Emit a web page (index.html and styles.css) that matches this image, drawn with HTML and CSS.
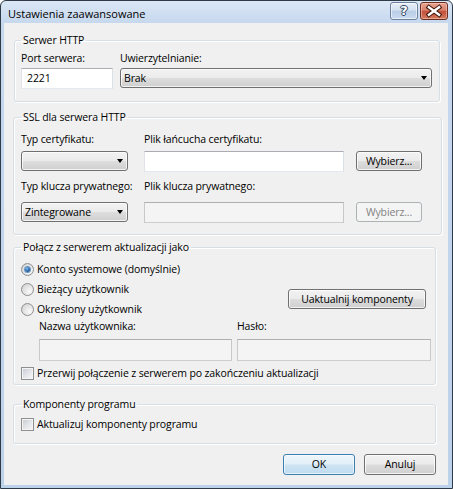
FILE: index.html
```html
<!DOCTYPE html>
<html lang="pl">
<head>
<meta charset="utf-8">
<title>Ustawienia zaawansowane</title>
<link rel="stylesheet" href="styles.css">
</head>
<body>
<div class="window">
  <div class="titlebar">
    <span class="title">Ustawienia zaawansowane</span>
    <div class="caption-btns">
      <div class="cap help"><span>?</span></div>
      <div class="cap close">
        <svg width="28" height="18" viewBox="0 0 28 18">
          <path d="M8.5 5 L19.5 13 M19.5 5 L8.5 13" stroke="#3b1309" stroke-width="4.8" stroke-linecap="square" fill="none"/>
          <path d="M8.5 5 L19.5 13 M19.5 5 L8.5 13" stroke="#ffffff" stroke-width="2.6" stroke-linecap="square" fill="none"/>
        </svg>
      </div>
    </div>
  </div>
  <div class="client">
    <fieldset class="group g1">
      <legend>Serwer HTTP</legend>
      <div class="g1-row">
        <div class="col port">
          <div class="lbl">Port serwera:</div>
          <div class="textbox">2221</div>
        </div>
        <div class="col auth">
          <div class="lbl">Uwierzytelnianie:</div>
          <div class="combo"><span>Brak</span><i class="arrow"></i></div>
        </div>
      </div>
    </fieldset>

    <fieldset class="group g2">
      <legend>SSL dla serwera HTTP</legend>
      <div class="ssl-grid">
        <div class="lbl r1">Typ certyfikatu:</div>
        <div class="lbl r1">Plik łańcucha certyfikatu:</div>
        <div class="r1"></div>
        <div class="combo c1"><span></span><i class="arrow"></i></div>
        <div class="textbox c1"></div>
        <div class="btn c1">Wybierz...</div>
        <div class="lbl r2">Typ klucza prywatnego:</div>
        <div class="lbl r2">Plik klucza prywatnego:</div>
        <div class="r2"></div>
        <div class="combo c2"><span>Zintegrowane</span><i class="arrow"></i></div>
        <div class="textbox disabled c2"></div>
        <div class="btn disabled c2">Wybierz...</div>
      </div>
    </fieldset>

    <fieldset class="group g3">
      <legend>Połącz z serwerem aktualizacji jako</legend>
      <div class="g3-top">
        <div class="radios">
          <div class="opt"><span class="radio checked"></span><span>Konto systemowe (domyślnie)</span></div>
          <div class="opt"><span class="radio"></span><span>Bieżący użytkownik</span></div>
          <div class="opt"><span class="radio"></span><span>Określony użytkownik</span></div>
        </div>
        <div class="btn update">Uaktualnij komponenty</div>
      </div>
      <div class="cred">
        <div class="lbl">Nazwa użytkownika:</div>
        <div class="lbl">Hasło:</div>
        <div class="textbox disabled tall"></div>
        <div class="textbox disabled tall"></div>
      </div>
      <div class="opt chk-row"><span class="checkbox"></span><span>Przerwij połączenie z serwerem po zakończeniu aktualizacji</span></div>
    </fieldset>

    <fieldset class="group g4">
      <legend>Komponenty programu</legend>
      <div class="opt chk-row"><span class="checkbox"></span><span>Aktualizuj komponenty programu</span></div>
    </fieldset>

    <div class="footer">
      <div class="btn default">OK</div>
      <div class="btn">Anuluj</div>
    </div>
  </div>
</div>
</body>
</html>
```

FILE: styles.css
```css
html, body {
  margin: 0;
  padding: 0;
  background: #ffffff;
}

body {
  font-family: "Open Sans", "Noto Sans", sans-serif;
  font-size: 10.5px;
  letter-spacing: -0.12px;
  line-height: 15px;
  color: #000000;
}

.window {
  width: 453px;
  height: 489px;
  box-sizing: border-box;
  border: 1px solid #2e3a48;
  border-radius: 6px 6px 0 0;
  background: linear-gradient(#dbe7f5 0px, #c6d8ee 22px, #bcd1ea 100%);
  padding: 0 4px 3px 3px;
  display: flex;
  flex-direction: column;
}

/* ---------- title bar ---------- */
.titlebar {
  height: 22px;
  flex: none;
  display: flex;
  align-items: flex-start;
}

.title {
  font-size: 11px;
  letter-spacing: 0;
  line-height: 15px;
  padding: 5px 0 0 4px;
  color: #000;
}

.caption-btns {
  margin-left: auto;
  display: flex;
  gap: 2px;
  padding-top: 1px;
}

.cap {
  width: 28px;
  height: 18px;
  box-sizing: border-box;
  border-radius: 3px;
  display: flex;
  align-items: center;
  justify-content: center;
}

.help {
  border: 1px solid #6b819e;
  background: linear-gradient(#e9f0f8 0%, #d3e1f1 45%, #b9cde6 50%, #c9dbef 100%);
  box-shadow: inset 0 0 0 1px rgba(255, 255, 255, 0.6);
}

.help span {
  font-family: "DejaVu Sans", sans-serif;
  font-weight: bold;
  font-size: 13px;
  letter-spacing: 0;
  line-height: 16px;
  color: #ffffff;
  text-shadow: 1px 0 0 #2f4361, -1px 0 0 #2f4361, 0 1px 0 #2f4361, 0 -1px 0 #2f4361;
}

.close {
  border: 1px solid #6e2d21;
  background: linear-gradient(#e8a591 0%, #d7806a 45%, #c4503a 52%, #d27b5f 100%);
  box-shadow: inset 0 0 0 1px rgba(255, 220, 210, 0.45);
}

.close svg {
  display: block;
}

/* ---------- client ---------- */
.client {
  flex: 1;
  background: #f0f0f0;
  padding: 10px 0 0 10px;
  display: flex;
  flex-direction: column;
  align-items: flex-start;
}

.group {
  box-sizing: border-box;
  margin: 0;
  min-width: 0;
  border: 1px solid #d5dfe5;
  border-radius: 3px;
  box-shadow: inset 1px 1px 0 #ffffff, 1px 1px 0 #ffffff;
}

.group legend {
  padding: 0 2px;
  line-height: 15px;
}

.lbl {
  white-space: nowrap;
  height: 15px;
}

/* group 1 */
.g1 {
  width: 426px;
  padding: 3px 7px 12px 6px;
}

.g1-row {
  display: flex;
  gap: 7px;
}

.col.port {
  width: 92px;
}

.col.auth {
  flex: 1;
}

.g1 .textbox,
.g1 .combo {
  margin-top: 2px;
}

.g1 .textbox {
  height: 21px;
}

/* group 2 */
.g2 {
  width: 429px;
  margin: 8px 0 0 -1px;
  padding: 7px 7px 11px 7px;
}

.ssl-grid {
  display: grid;
  grid-template-columns: 107px 200px 62px;
  column-gap: 16px;
}

.ssl-grid > :nth-child(3n) {
  margin-left: -4px;
}

.ssl-grid .c1 {
  margin-top: 4px;
}

.ssl-grid .r2 {
  margin-top: 7px;
}

.ssl-grid .c2 {
  margin-top: 8px;
}

/* group 3 */
.g3 {
  width: 423px;
  margin: 5px 0 0 -1px;
  padding: 4px 4px 3px 7px;
}

.g3-top {
  display: flex;
}

.radios {
  display: flex;
  flex-direction: column;
}

.opt {
  display: flex;
  align-items: center;
  gap: 3px;
  height: 20px;
  white-space: nowrap;
}

.btn.update {
  width: 138px;
  margin: 30px 5px 0 auto;
}

.cred {
  display: grid;
  grid-template-columns: 193px 194px;
  column-gap: 5px;
  margin-left: 18px;
}

.cred .textbox {
  margin-top: 5px;
  height: 22px;
}

.chk-row {
  height: 15px;
  gap: 3px;
}

.g3 .chk-row {
  margin-top: 5px;
}

/* group 4 */
.g4 {
  width: 423px;
  margin: 12px 0 0 -1px;
  padding: 5px 4px 11px 7px;
}

/* footer */
.footer {
  align-self: stretch;
  display: flex;
  justify-content: flex-end;
  gap: 9px;
  margin-top: 10px;
  padding-right: 12px;
}

.footer .btn {
  width: 72px;
  height: 21px;
}

/* ---------- controls ---------- */
.textbox {
  box-sizing: border-box;
  height: 21px;
  border: 1px solid;
  border-color: #abadb3 #dbdfe6 #e3e9ef #e2e3ea;
  background: #ffffff;
  padding: 0 5px;
  display: flex;
  align-items: center;
}

.textbox.disabled {
  background: #f4f4f4;
  border-color: #afafaf #c8c8c8 #cdcdcd #c8c8c8;
}

.combo,
.btn {
  box-sizing: border-box;
  height: 20px;
  border: 1px solid #707070;
  border-radius: 3px;
  background: linear-gradient(#f2f2f2 0%, #ebebeb 48%, #dddddd 52%, #cfcfcf 100%);
  box-shadow: inset 0 0 0 1px rgba(255, 255, 255, 0.75);
  display: flex;
  align-items: center;
}

.combo {
  padding: 0 4px 0 3px;
}

.combo .arrow {
  margin-left: auto;
  width: 0;
  height: 0;
  border-left: 3.5px solid transparent;
  border-right: 3.5px solid transparent;
  border-top: 4px solid #000000;
}

.btn {
  justify-content: center;
}

.btn.disabled {
  border-color: #adb2b5;
  background: #f4f4f4;
  box-shadow: none;
  color: #838383;
}

.btn.default {
  border-color: #3c7fb1;
  background: linear-gradient(#eef6fb 0%, #e2eff8 48%, #cde4f3 52%, #c0dcf0 100%);
  box-shadow: inset 0 0 0 1px rgba(255, 255, 255, 0.6);
}

.radio {
  flex: none;
  width: 13px;
  height: 13px;
  box-sizing: border-box;
  border-radius: 50%;
  border: 1px solid #8e8f8f;
  background: radial-gradient(circle at 70% 70%, #fafafa 0%, #e6e6e6 45%, #cbcbcb 100%);
  display: flex;
  align-items: center;
  justify-content: center;
}

.radio.checked::after {
  content: "";
  width: 5px;
  height: 5px;
  border-radius: 50%;
  background: radial-gradient(circle at 40% 35%, #8ec3f0 0%, #2d6fb3 45%, #133c68 100%);
  box-shadow: 0 0 0 1px #6b9bc9;
}

.checkbox {
  flex: none;
  width: 13px;
  height: 13px;
  box-sizing: border-box;
  border: 1px solid #8e8f8f;
  background: linear-gradient(135deg, #c4c9d0 0%, #e4e6ea 55%, #f7f7f7 100%);
  box-shadow: inset 0 0 0 1px #f4f4f4;
}
```
